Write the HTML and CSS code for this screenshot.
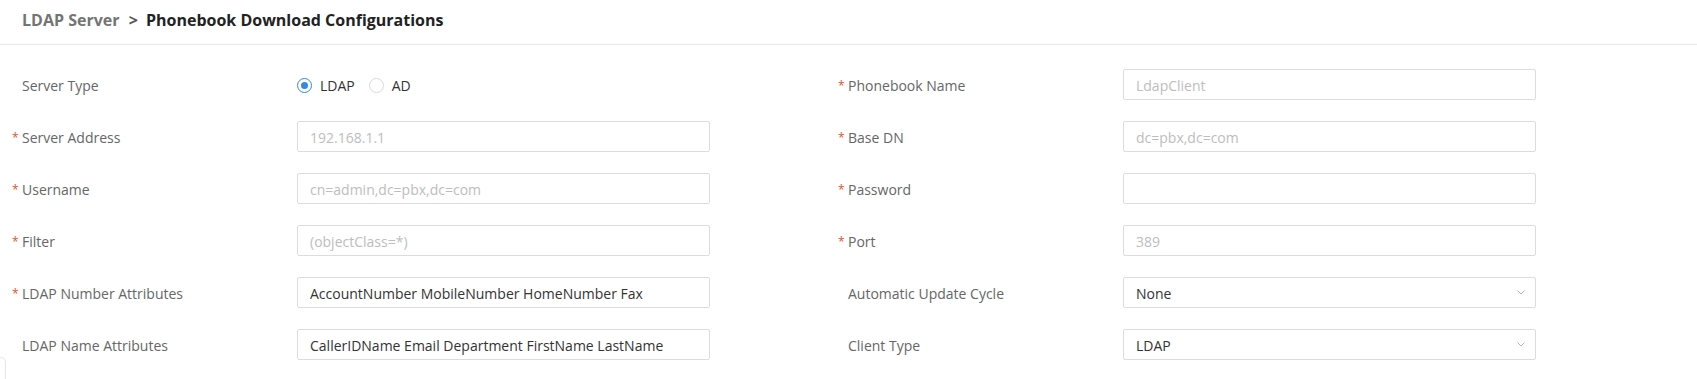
FILE: index.html
```html
<!DOCTYPE html>
<html lang="en">
<head>
    <meta charset="UTF-8">
    <meta name="viewport" content="width=device-width, initial-scale=1.0">
    <title>Phonebook Download Configurations</title>
    <link rel="stylesheet" href="styles.css">
</head>
<body>
    <!-- Breadcrumb header -->
    <div class="page-header">
        <span class="crumb">LDAP Server</span>
        <span class="crumb-sep">&gt;</span>
        <span class="crumb-current">Phonebook Download Configurations</span>
    </div>

    <!-- Config form -->
    <form class="config-form">
        <div class="form-item">
            <label class="form-label"><span class="star"></span>Server Type</label>
            <div class="radio-group">
                <label class="radio checked"><span class="radio-dot"></span>LDAP</label>
                <label class="radio"><span class="radio-dot"></span>AD</label>
            </div>
        </div>
        <div class="form-item">
            <label class="form-label"><span class="star">*</span>Phonebook Name</label>
            <input type="text" placeholder="LdapClient">
        </div>

        <div class="form-item">
            <label class="form-label"><span class="star">*</span>Server Address</label>
            <input type="text" placeholder="192.168.1.1">
        </div>
        <div class="form-item">
            <label class="form-label"><span class="star">*</span>Base DN</label>
            <input type="text" placeholder="dc=pbx,dc=com">
        </div>

        <div class="form-item">
            <label class="form-label"><span class="star">*</span>Username</label>
            <input type="text" placeholder="cn=admin,dc=pbx,dc=com">
        </div>
        <div class="form-item">
            <label class="form-label"><span class="star">*</span>Password</label>
            <input type="password">
        </div>

        <div class="form-item">
            <label class="form-label"><span class="star">*</span>Filter</label>
            <input type="text" placeholder="(objectClass=*)">
        </div>
        <div class="form-item">
            <label class="form-label"><span class="star">*</span>Port</label>
            <input type="text" placeholder="389">
        </div>

        <div class="form-item">
            <label class="form-label"><span class="star">*</span>LDAP Number Attributes</label>
            <input type="text" value="AccountNumber MobileNumber HomeNumber Fax">
        </div>
        <div class="form-item">
            <label class="form-label"><span class="star"></span>Automatic Update Cycle</label>
            <div class="select">
                <span>None</span>
                <svg class="arrow" width="8" height="5" viewBox="0 0 8 5"><path d="M0.5 0.5 L4 4 L7.5 0.5" fill="none" stroke="#b5b5b5" stroke-width="1"/></svg>
            </div>
        </div>

        <div class="form-item">
            <label class="form-label"><span class="star"></span>LDAP Name Attributes</label>
            <input type="text" value="CallerIDName Email Department FirstName LastName">
        </div>
        <div class="form-item">
            <label class="form-label"><span class="star"></span>Client Type</label>
            <div class="select">
                <span>LDAP</span>
                <svg class="arrow" width="8" height="5" viewBox="0 0 8 5"><path d="M0.5 0.5 L4 4 L7.5 0.5" fill="none" stroke="#b5b5b5" stroke-width="1"/></svg>
            </div>
        </div>
    </form>

    <!-- edge of a floating panel peeking in -->
    <div class="side-tab"></div>
</body>
</html>
```

FILE: styles.css
```css
* {
    box-sizing: border-box;
    margin: 0;
    padding: 0;
}

body {
    font-family: 'Open Sans', 'Liberation Sans', sans-serif;
    background-color: #fff;
    color: #333;
    height: 379px;
    overflow: hidden;
    position: relative;
}

/* Header */
.page-header {
    line-height: 40px;
    padding: 0 0 4px 22px;
    border-bottom: 1px solid #e8e8e8;
    font-size: 16px;
    font-weight: 700;
}

.crumb {
    color: #747474;
}

.crumb-sep {
    color: #555;
    margin: 0 4px 0 5px;
}

.crumb-current {
    color: #222;
}

/* Form */
.config-form {
    display: grid;
    grid-template-columns: 826px 826px;
    row-gap: 21px;
    padding: 24px 0 0 12px;
}

.form-item {
    display: flex;
    align-items: center;
    height: 31px;
}

.form-label {
    width: 285px;
    padding-top: 2px;
    font-size: 14px;
    color: #666;
    display: flex;
    align-items: center;
}

.star {
    width: 10px;
    color: #e2552f;
    font-size: 12px;
}

input, .select {
    width: 413px;
    height: 31px;
    border: 1px solid #dcdcdc;
    border-radius: 2px;
    padding: 2px 12px 0;
    font-family: 'Open Sans', 'Liberation Sans', sans-serif;
    font-size: 14px;
    color: #333;
    background: #fff;
    outline: none;
}

input::placeholder {
    color: #bdbdbd;
}

.select {
    display: flex;
    align-items: center;
    justify-content: space-between;
    padding-right: 10px;
}

.select .arrow {
    margin-top: -2px;
}

/* Radios */
.radio-group {
    display: flex;
    gap: 14px;
    padding-top: 2px;
}

.radio {
    display: flex;
    align-items: center;
    gap: 8px;
    font-size: 14px;
    color: #333;
}

.radio-dot {
    width: 15px;
    height: 15px;
    border: 1px solid #d9d9d9;
    border-radius: 50%;
    position: relative;
}

.radio.checked .radio-dot {
    border-color: #2f8ae5;
}

.radio.checked .radio-dot::after {
    content: '';
    position: absolute;
    top: 3px;
    left: 3px;
    width: 7px;
    height: 7px;
    border-radius: 50%;
    background-color: #2f8ae5;
}

.side-tab {
    position: absolute;
    left: -20px;
    top: 357px;
    width: 26px;
    height: 30px;
    border: 1px solid #e6e6e6;
    border-radius: 5px;
}
```
